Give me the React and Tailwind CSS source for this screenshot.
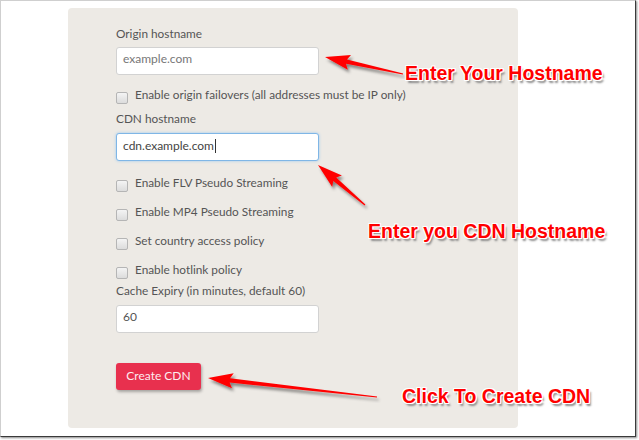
import React from "react";

function Box() {
  return (
    <span className="mt-[5px] inline-block h-[12px] w-[12px] shrink-0 rounded-[2px] border border-[#b5b5b5] bg-gradient-to-b from-[#f4f4f4] to-[#dcdcdc]" />
  );
}

function Check({ label }) {
  return (
    <div className="flex h-[29px] items-start gap-[7px]">
      <Box />
      <span className="leading-[16px]">{label}</span>
    </div>
  );
}

function arrowPoints(x1, y1, x2, y2) {
  const dx = x2 - x1;
  const dy = y2 - y1;
  const len = Math.hypot(dx, dy);
  const ux = dx / len;
  const uy = dy / len;
  const nx = -uy;
  const ny = ux;
  const head = 22;
  const bx = x2 - ux * head;
  const by = y2 - uy * head;
  const p = (x, y) => `${x.toFixed(1)},${y.toFixed(1)}`;
  return [
    p(x1 + nx * 0.6, y1 + ny * 0.6),
    p(bx + nx * 2.2, by + ny * 2.2),
    p(bx + nx * 7.5 - ux * 3, by + ny * 7.5 - uy * 3),
    p(x2, y2),
    p(bx - nx * 7.5 - ux * 3, by - ny * 7.5 - uy * 3),
    p(bx - nx * 2.2, by - ny * 2.2),
    p(x1 - nx * 0.6, y1 - ny * 0.6),
  ].join(" ");
}

const arrows = [
  [403, 74, 325, 57],
  [365, 205, 318, 165],
  [377, 397, 208, 378],
];

const note =
  "absolute whitespace-nowrap font-['Liberation_Sans',Arial,sans-serif] text-[19.5px] font-bold leading-none text-[#ff0000] [text-shadow:1px_0_0_#fff,-1px_0_0_#fff,0_1px_0_#fff,0_-1px_0_#fff,1px_1px_0_#fff,-1px_-1px_0_#fff,1px_-1px_0_#fff,-1px_1px_0_#fff,2px_3px_2px_#8a8a8a]";

export default function App() {
  return (
    <div className="relative h-[440px] w-[639px] overflow-hidden bg-white">
      <div className="h-[437px] w-[636px] border border-[#cfcfcf] border-b-[#3a3a3a] border-r-[#3a3a3a] bg-white pl-[67px] pt-[7px] shadow-[1px_1px_2px_#888]">
        <div className="h-[420px] w-[450px] rounded-[4px] bg-[#edeae5] pl-[48px] pt-[17px] font-['Lato','Open_Sans',sans-serif] text-[11.8px] text-[#555]">
          <div className="h-[18px] leading-[18px]">Origin hostname</div>
          <div className="mt-[4px] flex h-[28px] w-[203px] items-center rounded-[3px] border border-[#d2d2d2] bg-white px-[6px] pb-[4px] text-[12px] text-[#777]">
            example.com
          </div>
          <div className="mt-[12px] flex h-[23px] items-start gap-[7px]">
            <Box />
            <span className="leading-[16px]">Enable origin failovers (all addresses must be IP only)</span>
          </div>
          <div className="h-[18px] leading-[18px]">CDN hostname</div>
          <div className="mt-[5px] flex h-[28px] w-[203px] items-center rounded-[3px] border border-[#7fb6e6] bg-white px-[6px] pb-[2px] text-[12px] text-[#444] shadow-[0_0_3px_#9cc8f0]">
            cdn.example.com<span className="ml-px inline-block h-[14px] w-px bg-[#333]" />
          </div>
          <div className="mt-[14px]">
            <Check label="Enable FLV Pseudo Streaming" />
            <Check label="Enable MP4 Pseudo Streaming" />
            <Check label="Set country access policy" />
            <div className="flex h-[20px] items-start gap-[7px]">
              <Box />
              <span className="leading-[16px]">Enable hotlink policy</span>
            </div>
          </div>
          <div className="h-[18px] leading-[18px]">Cache Expiry (in minutes, default 60)</div>
          <div className="mt-[5px] flex h-[28px] w-[203px] items-center rounded-[3px] border border-[#d2d2d2] bg-white px-[6px] pb-[4px] text-[12px] text-[#555]">
            60
          </div>
          <div className="mt-[30px] flex h-[27px] w-[85px] items-center justify-center rounded-[3px] bg-[#e8304e] pb-[2px] text-[12px] text-[#fdecef] shadow-[1px_2px_3px_rgba(0,0,0,0.3)]">
            Create CDN
          </div>
        </div>
      </div>

      <svg className="pointer-events-none absolute left-0 top-0" width="639" height="440">
        <defs>
          <filter id="sh" x="-20%" y="-20%" width="140%" height="140%">
            <feDropShadow dx="2" dy="3" stdDeviation="1.5" floodColor="#000" floodOpacity="0.45" />
          </filter>
        </defs>
        {arrows.map((a, i) => (
          <polygon key={i} points={arrowPoints(...a)} fill="#ff0000" filter="url(#sh)" />
        ))}
      </svg>

      <div className={note + " left-[405px] top-[64px]"}>Enter Your Hostname</div>
      <div className={note + " left-[368px] top-[222px]"}>Enter you CDN Hostname</div>
      <div className={note + " left-[402px] top-[387px]"}>Click To Create CDN</div>
    </div>
  );
}
